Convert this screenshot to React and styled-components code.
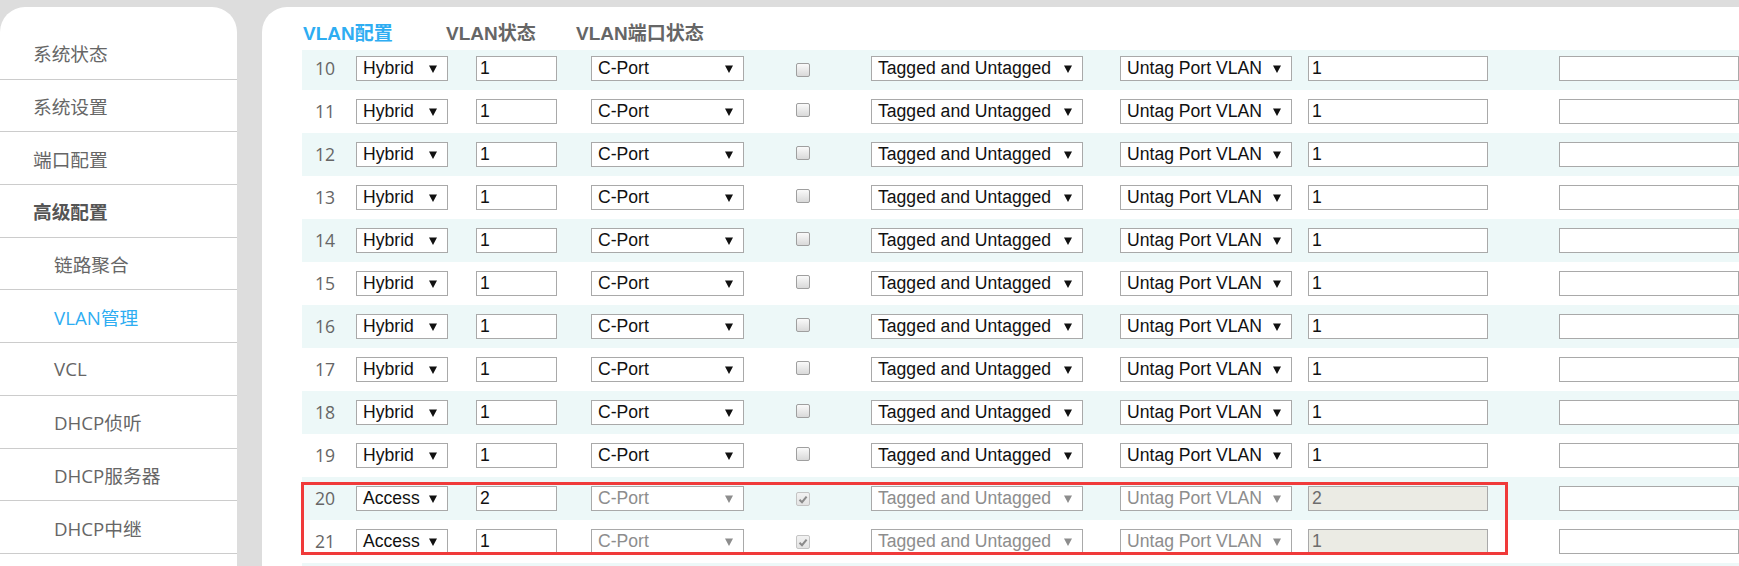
import React from "react";
import styled, { createGlobalStyle } from "styled-components";

const GlobalStyle = createGlobalStyle`
  html, body {
    margin: 0;
    padding: 0;
    background: #dddddd;
    overflow: hidden;
  }
`;

const Page = styled.div`
  display: flex;
  gap: 25px;
  padding-top: 7px;
  width: 1739px;
  height: 566px;
  box-sizing: border-box;
  overflow: hidden;
`;

/* 左侧菜单 */
const Sidebar = styled.nav`
  flex: 0 0 237px;
  background: #fff;
  border-radius: 25px 25px 0 0;
  padding-top: 20px;
  font-family: "Open Sans", "Noto Sans CJK SC", sans-serif;
`;

const MenuItem = styled.div`
  height: 52.7px;
  box-sizing: border-box;
  border-bottom: 1px solid #cccccc;
  display: flex;
  align-items: center;
  padding-left: ${(p) => (p.$sub ? 54 : 33)}px;
  font-size: 18.7px;
  font-weight: ${(p) => (p.$group ? 700 : 400)};
  color: ${(p) => (p.$active ? "#2eadf2" : p.$group ? "#555" : "#666")};
`;

/* 右侧内容 */
const Main = styled.main`
  flex: 1;
  min-width: 0;
  background: #fff;
  border-radius: 25px 0 0 0;
  padding-left: 40px;
  overflow: hidden;
`;

const Tabs = styled.div`
  display: flex;
  align-items: center;
  height: 43px;
  padding: 5px 0 0 1px;
  box-sizing: border-box;
`;

const Tab = styled.div`
  flex: 0 0 ${(p) => (p.$w ? `${p.$w}px` : "auto")};
  font-family: "Liberation Sans", "Noto Sans CJK SC", sans-serif;
  font-size: 19px;
  font-weight: 700;
  color: ${(p) => (p.$active ? "#2eadf2" : "#666")};
`;

const Row = styled.div`
  display: grid;
  grid-template-columns: 54px 120px 115px 205px 75px 249px 188px 251px 180px;
  align-items: ${(p) => (p.$first ? "end" : "center")};
  height: ${(p) => (p.$first ? 40 : 43)}px;
  padding-bottom: ${(p) => (p.$first ? 9 : 0)}px;
  box-sizing: border-box;
  background: ${(p) => (p.$tint ? "#edf8f8" : "transparent")};
`;

const PortNo = styled.div`
  padding-left: 13px;
  height: 25px;
  line-height: 25px;
  font-family: "Open Sans", "Noto Sans CJK SC", sans-serif;
  font-size: 17.6px;
  color: #666;
`;

const SelectBox = styled.div`
  width: ${(p) => p.$w}px;
  height: 25px;
  box-sizing: border-box;
  border: 1px solid #a9a9a9;
  background: #fff;
  display: flex;
  align-items: center;
  justify-content: space-between;
  padding: 0 10px 0 6px;
  font-family: "Liberation Sans", Arial, sans-serif;
  font-size: 17.6px;
  color: ${(p) => (p.$disabled ? "#8d8d8d" : "#111")};
  white-space: nowrap;
  overflow: hidden;

  svg {
    flex: 0 0 auto;
    fill: ${(p) => (p.$disabled ? "#8d8d8d" : "#111")};
  }
`;

const TextInput = styled.input`
  width: ${(p) => p.$w}px;
  height: 25px;
  box-sizing: border-box;
  margin: 0;
  padding: 0 3px;
  border: 1px solid #a9a9a9;
  border-radius: 0;
  outline: none;
  background: #fff;
  font-family: "Liberation Sans", Arial, sans-serif;
  font-size: 17.6px;
  color: #111;

  &:disabled {
    background: #ebebe4;
    color: #6d6d6d;
  }
`;

const CheckBox = styled.span`
  display: inline-flex;
  align-items: center;
  justify-content: center;
  width: 14px;
  height: 14px;
  box-sizing: border-box;
  border: 1px solid ${(p) => (p.$disabled ? "#c4c4c4" : "#9f9f9f")};
  border-radius: 2px;
  background: ${(p) =>
    p.$disabled
      ? "linear-gradient(#f2f2f2, #e3e3e3)"
      : "linear-gradient(#fafafa, #d9d9d9)"};
`;

const Marked = styled.div`
  position: relative;

  &::after {
    content: "";
    position: absolute;
    top: 5px;
    left: -1px;
    width: 1207px;
    height: 73px;
    box-sizing: border-box;
    border: 3px solid #f03a3a;
    pointer-events: none;
  }
`;

const Arrow = () => (
  <svg width="8" height="8" viewBox="0 0 8 8">
    <polygon points="0,0.5 8,0.5 4,8" />
  </svg>
);

const Select = ({ w, value, disabled }) => (
  <SelectBox $w={w} $disabled={disabled}>
    <span>{value}</span>
    <Arrow />
  </SelectBox>
);

const Check = ({ checked, disabled }) => (
  <CheckBox $disabled={disabled}>
    {checked && (
      <svg width="10" height="9" viewBox="0 0 10 9">
        <polyline
          points="1.5,4.8 4,7.2 8.6,1.6"
          fill="none"
          stroke="#8a8a8a"
          strokeWidth="2"
        />
      </svg>
    )}
  </CheckBox>
);

const menu = [
  { label: "系统状态" },
  { label: "系统设置" },
  { label: "端口配置" },
  { label: "高级配置", group: true },
  { label: "链路聚合", sub: true },
  { label: "VLAN管理", sub: true, active: true },
  { label: "VCL", sub: true },
  { label: "DHCP侦听", sub: true },
  { label: "DHCP服务器", sub: true },
  { label: "DHCP中继", sub: true },
];

const normal = Array.from({ length: 10 }, (_, i) => ({ no: 10 + i, mode: "Hybrid", pvid: "1" }));
const locked = [
  { no: 20, mode: "Access", pvid: "2", locked: true },
  { no: 21, mode: "Access", pvid: "1", locked: true },
];

const PortRow = ({ port, index }) => {
  const off = !!port.locked;
  return (
    <Row $tint={index % 2 === 0} $first={index === 0}>
      <PortNo>{port.no}</PortNo>
      <Select w={92} value={port.mode} />
      <TextInput $w={81} defaultValue={port.pvid} />
      <Select w={153} value="C-Port" disabled={off} />
      <div>
        <Check checked={off} disabled={off} />
      </div>
      <Select w={212} value="Tagged and Untagged" disabled={off} />
      <Select w={172} value="Untag Port VLAN" disabled={off} />
      <TextInput $w={180} defaultValue={port.pvid} disabled={off} />
      <TextInput $w={180} defaultValue="" />
    </Row>
  );
};

export default function App() {
  return (
    <>
      <GlobalStyle />
      <Page>
        <Sidebar>
          {menu.map((m) => (
            <MenuItem key={m.label} $sub={m.sub} $group={m.group} $active={m.active}>
              {m.label}
            </MenuItem>
          ))}
        </Sidebar>
        <Main>
          <Tabs>
            <Tab $w={143} $active>
              VLAN配置
            </Tab>
            <Tab $w={130}>VLAN状态</Tab>
            <Tab>VLAN端口状态</Tab>
          </Tabs>
          {normal.map((p, i) => (
            <PortRow key={p.no} port={p} index={i} />
          ))}
          <Marked>
            {locked.map((p, i) => (
              <PortRow key={p.no} port={p} index={normal.length + i} />
            ))}
          </Marked>
          {/* 下一行只露出背景 */}
          <Row $tint />
        </Main>
      </Page>
    </>
  );
}
